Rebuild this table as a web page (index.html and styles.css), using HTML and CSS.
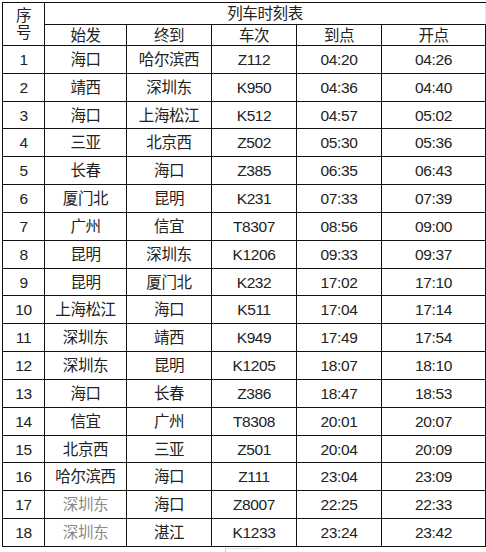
FILE: index.html
```html
<!DOCTYPE html>
<html lang="zh-CN">
<head>
<meta charset="utf-8">
<title>列车时刻表</title>
<link rel="stylesheet" href="styles.css">
</head>
<body>
<table class="timetable">
  <colgroup>
    <col class="c-no"><col class="c-from"><col class="c-to"><col class="c-train"><col class="c-arr"><col class="c-dep">
  </colgroup>
  <thead>
    <tr class="h1">
      <th rowspan="2" class="no-head">序<br>号</th>
      <th colspan="5" class="title">列车时刻表</th>
    </tr>
    <tr class="h2">
      <th>始发</th><th>终到</th><th>车次</th><th>到点</th><th>开点</th>
    </tr>
  </thead>
  <tbody>
    <tr><td>1</td><td>海口</td><td>哈尔滨西</td><td>Z112</td><td>04:20</td><td>04:26</td></tr>
    <tr><td>2</td><td>靖西</td><td>深圳东</td><td>K950</td><td>04:36</td><td>04:40</td></tr>
    <tr><td>3</td><td>海口</td><td>上海松江</td><td>K512</td><td>04:57</td><td>05:02</td></tr>
    <tr><td>4</td><td>三亚</td><td>北京西</td><td>Z502</td><td>05:30</td><td>05:36</td></tr>
    <tr><td>5</td><td>长春</td><td>海口</td><td>Z385</td><td>06:35</td><td>06:43</td></tr>
    <tr><td>6</td><td>厦门北</td><td>昆明</td><td>K231</td><td>07:33</td><td>07:39</td></tr>
    <tr><td>7</td><td>广州</td><td>信宜</td><td>T8307</td><td>08:56</td><td>09:00</td></tr>
    <tr><td>8</td><td>昆明</td><td>深圳东</td><td>K1206</td><td>09:33</td><td>09:37</td></tr>
    <tr><td>9</td><td>昆明</td><td>厦门北</td><td>K232</td><td>17:02</td><td>17:10</td></tr>
    <tr><td>10</td><td>上海松江</td><td>海口</td><td>K511</td><td>17:04</td><td>17:14</td></tr>
    <tr><td>11</td><td>深圳东</td><td>靖西</td><td>K949</td><td>17:49</td><td>17:54</td></tr>
    <tr><td>12</td><td>深圳东</td><td>昆明</td><td>K1205</td><td>18:07</td><td>18:10</td></tr>
    <tr><td>13</td><td>海口</td><td>长春</td><td>Z386</td><td>18:47</td><td>18:53</td></tr>
    <tr><td>14</td><td>信宜</td><td>广州</td><td>T8308</td><td>20:01</td><td>20:07</td></tr>
    <tr><td>15</td><td>北京西</td><td>三亚</td><td>Z501</td><td>20:04</td><td>20:09</td></tr>
    <tr><td>16</td><td>哈尔滨西</td><td>海口</td><td>Z111</td><td>23:04</td><td>23:09</td></tr>
    <tr><td>17</td><td class="faded">深圳东</td><td>海口</td><td>Z8007</td><td>22:25</td><td>22:33</td></tr>
    <tr><td>18</td><td class="faded">深圳东</td><td>湛江</td><td>K1233</td><td>23:24</td><td>23:42</td></tr>
  </tbody>
</table>
<div class="footer-strip"><span class="stub"></span></div>
</body>
</html>
```
FILE: styles.css
```css
html, body {
  margin: 0;
  padding: 0;
  background: #ffffff;
}
body {
  padding: 2px 0 0 2px;
  width: 486px;
  height: 552px;
  box-sizing: border-box;
  overflow: hidden;
  font-family: "Liberation Sans", "Noto Sans CJK SC", sans-serif;
  color: #222;
}
.timetable {
  border-collapse: collapse;
  table-layout: fixed;
  width: 483px;
}
.c-no { width: 42px; }
.c-from { width: 82px; }
.c-to { width: 85px; }
.c-train { width: 85px; }
.c-arr { width: 85px; }
.c-dep { width: 104px; }
.timetable th,
.timetable td {
  border: 1px solid #111;
  padding: 0;
  text-align: center;
  vertical-align: middle;
  font-weight: normal;
  font-size: 15.5px;
  line-height: 17px;
  letter-spacing: -0.4px;
}
.timetable .title {
  border-right-color: #d0d0d0;
  border-right-style: dotted;
}
.h1 { height: 22px; }
.h2 { height: 21px; }
.no-head { line-height: 20px; }
tbody tr { height: 27.83px; }
.faded { color: #8a8a8a; }
.footer-strip {
  height: 5px;
  position: relative;
}
.stub {
  position: absolute;
  left: 223px;
  top: 1px;
  width: 35px;
  height: 6px;
  border-left: 1px solid #cfcfcf;
  border-top: 1px solid #e2e2e2;
}
```
